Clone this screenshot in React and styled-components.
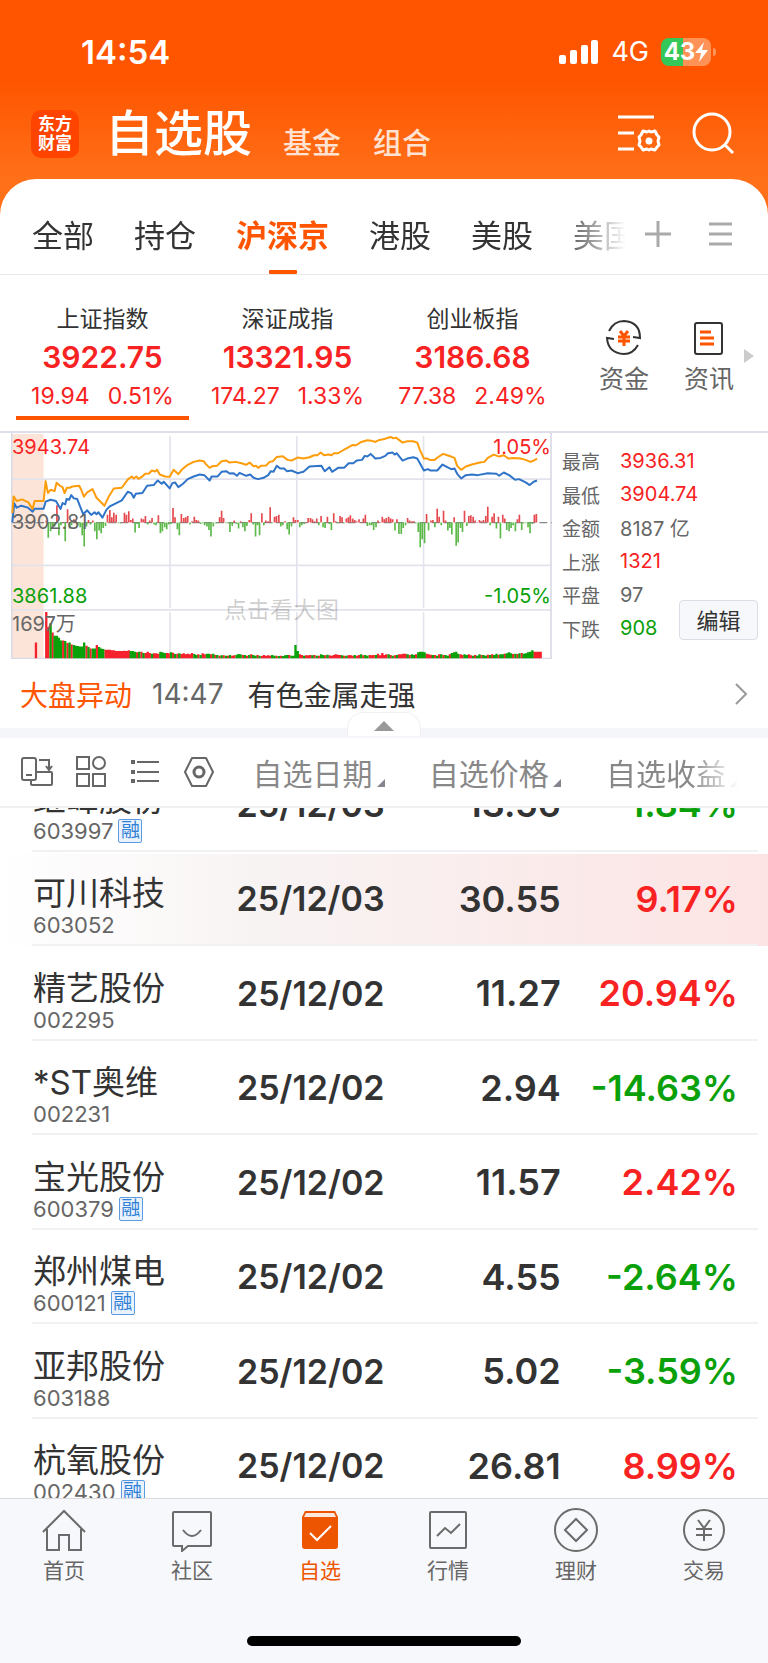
import React from 'react'
import styled, { createGlobalStyle } from 'styled-components';

const tabs = ['全部', '持仓', '沪深京', '港股', '美股', '美国'];

const indices = [
    { name: '上证指数', value: '3922.75', change: '19.94', percent: '0.51%', active: true },
    { name: '深证成指', value: '13321.95', change: '174.27', percent: '1.33%' },
    { name: '创业板指', value: '3186.68', change: '77.38', percent: '2.49%' },
];

const stats = [
    { label: '最高', value: '3936.31', tone: 'up' },
    { label: '最低', value: '3904.74', tone: 'up' },
    { label: '金额', value: '8187 亿' },
    { label: '上涨', value: '1321', tone: 'up' },
    { label: '平盘', value: '97' },
    { label: '下跌', value: '908', tone: 'down' },
];

const stocks = [
    { name: '继峰股份', code: '603997', margin: true, date: '25/12/03', price: '13.56', gain: '-1.84%' },
    { name: '可川科技', code: '603052', date: '25/12/03', price: '30.55', gain: '9.17%', flash: true },
    { name: '精艺股份', code: '002295', date: '25/12/02', price: '11.27', gain: '20.94%' },
    { name: '*ST奥维', code: '002231', date: '25/12/02', price: '2.94', gain: '-14.63%' },
    { name: '宝光股份', code: '600379', margin: true, date: '25/12/02', price: '11.57', gain: '2.42%' },
    { name: '郑州煤电', code: '600121', margin: true, date: '25/12/02', price: '4.55', gain: '-2.64%' },
    { name: '亚邦股份', code: '603188', date: '25/12/02', price: '5.02', gain: '-3.59%' },
    { name: '杭氧股份', code: '002430', margin: true, date: '25/12/02', price: '26.81', gain: '8.99%' },
];

// Chart units: 1626 x 681, x runs over the session, y grows downwards
const leadLine = '4,241 8,191 17,205 33,200 52,209 65,229 71,205 98,205 104,145 111,181 119,171 131,175 137,150 147,159 155,163 161,181 168,165 177,165 185,161 205,159 211,171 219,192 229,179 245,169 257,195 269,207 281,219 293,193 309,167 333,165 352,139 363,131 369,137 377,131 383,138 395,131 403,123 415,122 423,113 433,116 439,111 447,125 463,131 477,132 489,111 503,124 513,111 531,96 549,87 567,83 579,85 585,93 597,105 605,100 619,99 633,85 647,83 657,89 675,87 693,91 707,96 717,89 729,100 737,99 743,105 751,99 767,98 777,87 787,85 799,72 817,70 831,81 843,83 861,74 879,77 897,73 911,67 921,67 931,59 941,67 955,65 963,67 971,61 983,61 1003,49 1027,36 1037,37 1053,27 1071,22 1083,23 1095,27 1107,21 1119,19 1141,12 1149,16 1157,14 1177,29 1191,25 1209,25 1221,29 1229,51 1241,77 1251,77 1259,81 1273,81 1283,73 1299,63 1311,67 1323,71 1333,75 1341,99 1353,111 1367,101 1385,95 1409,89 1423,87 1433,75 1451,65 1467,71 1481,67 1495,77 1511,75 1531,77 1547,81 1561,87 1571,83 1581,77';
const priceLine = '4,269 10,212 17,225 31,219 51,225 65,237 71,228 98,228 104,207 119,201 135,205 149,229 155,211 163,215 167,199 175,201 181,187 189,197 199,199 217,245 229,233 241,247 251,239 257,245 263,239 275,255 287,231 297,221 333,203 351,177 361,181 369,195 375,183 395,181 409,159 429,157 441,143 453,153 459,147 477,167 485,151 493,149 503,163 517,153 531,139 549,131 567,125 581,127 597,143 603,131 621,131 633,117 647,115 657,122 669,121 679,129 687,120 707,129 719,125 729,135 743,139 759,135 773,127 781,115 789,117 799,99 809,107 821,107 829,115 843,113 861,121 879,117 897,101 933,99 943,115 957,103 965,117 983,105 1001,105 1015,91 1029,91 1039,83 1055,81 1063,69 1071,71 1081,63 1095,77 1111,75 1125,69 1133,61 1147,59 1153,65 1159,61 1177,83 1191,77 1209,73 1221,77 1231,95 1241,113 1253,109 1261,113 1281,113 1297,95 1311,103 1323,109 1333,107 1341,123 1353,137 1367,127 1385,125 1403,127 1433,121 1459,123 1467,129 1481,119 1497,127 1515,141 1527,139 1547,149 1559,157 1571,147 1581,143';

const momentum = [
    6, -46, -26, -10, -12, 52, -38, -8, 2, -56, 40, -18, -8, 10, 6, -8, -14, -38, -72, -12,
    8, -6, 6, -26, -50, -24, -32, -16, -10, 24, 38, 16, 30, 24, -2, -2, 2, 30, 24, 34,
    8, 12, -30, -4, -16, 12, 10, 20, -6, 6, 14, -6, -8, 22, -32, -26, -14, -20, -6, -4,
    44, 16, -20, -38, 26, 14, 16, 20, -6, 4, 18, 8, 6, -4, -2, -8, -12, -22, -42, -12,
    -2, -2, 16, 36, 14, -2, -2, -28, -10, 6, -4, -18, 4, -14, -26, -10, 8, 28, -6, -42,
    -8, -38, 28, -8, 6, 4, 46, -2, 18, 20, 24, -12, -8, 4, -20, -36, -12, 16, 8, 8,
    -14, -8, -4, 2, 14, 14, 10, 4, 12, -8, 20, -14, -16, 18, -4, -22, 28, 4, -2, 20,
    16, -2, 12, 16, 22, 12, 8, 4, 10, 2, 12, 24, -10, -8, -8, -22, -14, 6, 2, 18,
    10, 14, 18, 12, 10, -24, 10, -34, -34, -16, -8, 14, 6, 4, 4, -2, -28, -74, -50, -62,
    26, -24, 6, 8, -14, 42, 18, -8, 36, 6, -24, -16, -36, 16, -70, -60, -16, -28, 36, -10,
    20, 22, 18, 6, 2, 8, 4, 8, 20, 48, -8, 18, 28, -18, 18, -48, 24, 12, -22, -26,
    -16, -8, -26, 10, 24, -22, -2, -2, -14, -32, -4, 24, 26,
];

// Positive bars are drawn red, negative ones green
const volume = [
    140, 94, -106, 78, -68, -68, -62, -54, 54, -52, 46, -48, 42, -40, -38, -37, -36, -36, -48, 38,
    -34, 30, -30, -30, 40, -34, -30, -28, 26, 26, 26, 24, 24, 22, 22, 22, 22, 23, 22, 24,
    -22, -22, -20, 18, -20, 20, -16, 16, 20, 16, -14, 15, 15, 14, -20, -18, -16, 16, 15, -18,
    17, -13, 14, -15, 13, 15, 12, 14, 12, 16, -13, -10, 12, -10, 15, 12, -14, -14, 12, -14,
    10, -10, 8, -9, 9, -8, 8, -10, 8, 9, -11, -13, -12, 10, -10, 8, -10, 12, -10, -8,
    10, -8, 7, 10, 8, 9, 8, -10, -8, 8, -7, 8, -7, -9, -10, 10, -8, -8, -40, -22,
    12, 10, -8, 9, 9, 10, -9, 10, -8, 8, -12, -10, 9, -11, 9, 8, 10, 12, 11, 10,
    -9, 8, -8, 9, 10, 8, -10, 8, 10, -12, 9, -10, -8, 10, 9, 10, -10, 14, 9, 16,
    10, 12, -12, 10, -8, 9, -10, 12, 12, 14, 14, -12, 10, -12, -10, 12, -18, -20, -20, -18,
    14, 12, 11, -10, 10, -8, 12, -12, 10, -10, -8, 12, -16, -18, -20, -14, 12, 10, -12, -10,
    12, 9, -8, 10, -8, -12, 10, -10, -8, 11, -10, 12, -10, -14, 11, -12, -12, 14, -15, -18,
    -15, 13, -14, 13, -15, 16, -14, -15, -18, -20, -24, 20, 20, 20, 20,
];

const barX = (i) => Math.round(106 + i * 6.35);
const momentumBar = (value, i) => `M${barX(i)} 270v${-value}`;
const volumeBar = (value, i) => `M${barX(i)} 679v${-Math.abs(value)}`;

const getBars = (values, draw, sign) => {
    return values.map((value, i) => value * sign > 0 ? draw(value, i) : '').join('');
}

const Chart = () => (
    <ChartArea>
        <ChartSvg viewBox="0 0 1626 681" preserveAspectRatio="none" aria-hidden="true">
            <rect x="3" y="3" width="95" height="675" fill="#fce5d8" />
            <g stroke="#e2e3ec" strokeWidth="5" fill="none">
                <path d="M0 139H1623M0 399H1623M0 533H1623" />
                <path d="M478 10V527M478 540V678M859 10V527M859 540V678M1240 10V527M1240 540V678" />
                <path d="M2 0V681M1623 0V681M0 680H1626" stroke="#d9dae6" />
            </g>
            <path d="M4 270H1626" stroke="#888" strokeWidth="4" strokeDasharray="24 12" />
            <g strokeWidth="5">
                <path d={getBars(momentum, momentumBar, 1)} stroke="#e5484d" />
                <path d={getBars(momentum, momentumBar, -1)} stroke="#5cb94a" />
            </g>
            <g strokeWidth="7">
                <path d={`M75 679V631${getBars(volume, volumeBar, 1)}`} stroke="#f5222d" />
                <path d={getBars(volume, volumeBar, -1)} stroke="#0aa00a" />
            </g>
            <g fill="none" strokeWidth="6" strokeLinejoin="round">
                <polyline points={priceLine} stroke="#2f74c8" />
                <polyline points={leadLine} stroke="#ff9c0a" />
            </g>
        </ChartSvg>
        <ChartLabel $top={4} $tone="up">3943.74</ChartLabel>
        <ChartLabel $top={4} $tone="up" $right>1.05%</ChartLabel>
        <ChartLabel $top={79}>3902.81</ChartLabel>
        <ChartLabel $top={153} $tone="down">3861.88</ChartLabel>
        <ChartLabel $top={153} $tone="down" $right>-1.05%</ChartLabel>
        <ChartLabel $top={181}>1697万</ChartLabel>
        <ChartHint>点击看大图</ChartHint>
    </ChartArea>
)

const navItems = [
    { label: '首页', icon: <path d="M1 24L22 3l21 21M5 21v21h12V27h10v15h12V21" /> },
    { label: '社区', icon: <path d="M4 4h36q1 0 1 1v32q0 1-1 1H18l-6 5v-5H4q-1 0-1-1V5q0-1 1-1zM13 22q9 12 18 0" /> },
    {
        label: '自选',
        active: true,
        icon: (
            <>
                <path d="M7 3h30l3 6v29q0 3-3 3H7q-3 0-3-3V9z" fill="#ee5500" stroke="none" />
                <path d="M8 5h28l2 4H6z" fill="#ffe9dd" stroke="none" />
                <path d="M12 25l7 7 14-14" stroke="#fff" />
            </>
        ),
    },
    { label: '行情', icon: <path d="M5 4h34q1 0 1 1v34q0 1-1 1H5q-1 0-1-1V5q0-1 1-1zM11 28l8-8 6 5 9-9" /> },
    { label: '理财', icon: <><circle cx="22" cy="22" r="21" /><path d="M22 11l11 11-11 11-11-11z" /></> },
    { label: '交易', icon: <><circle cx="22" cy="22" r="20" /><path d="M16 12l6 8 6-8M14 21h16M14 27h16M22 20v13" /></> },
];

const ToolIcons = () => (
    <Tools>
        <ToolButton aria-label="切换视图">
            <svg width="32" height="32" viewBox="0 0 32 32">
                <rect x="1" y="2" width="14" height="22" rx="2" />
                <path d="M5 19h6M18 4h10v9M25 10l3 4 3-4M15 16h15q1 0 1 1v11q0 1-1 1H11q-1 0-1-1v-4" />
            </svg>
        </ToolButton>
        <ToolButton aria-label="宫格">
            <svg width="32" height="32" viewBox="0 0 32 32">
                <path d="M2 1h12v12H2zM2 18h12v12H2zM18 18h12v12H18z" />
                <circle cx="24" cy="7" r="6" />
            </svg>
        </ToolButton>
        <ToolButton aria-label="列表">
            <svg width="32" height="32" viewBox="0 0 32 32">
                <path d="M8 6h22M8 16h22M8 25h22" />
                <path d="M2 6h4M2 16h4M2 25h4" strokeWidth="4" />
            </svg>
        </ToolButton>
        <ToolButton aria-label="设置">
            <svg width="32" height="32" viewBox="0 0 32 32">
                <path d="M9 2h14l7 14-7 14H9L2 16z" strokeLinejoin="round" />
                <circle cx="16" cy="16" r="5" strokeWidth="3" />
            </svg>
        </ToolButton>
    </Tools>
)

const App = () => (
    <Page>
        <GlobalStyle />
        <Header>
            <StatusBar>
                <Clock>14:54</Clock>
                <Signals>
                    <svg width="40" height="26" viewBox="0 0 40 26" fill="#fff" aria-hidden="true">
                        <rect x="0" y="16" width="7" height="9" rx="2" />
                        <rect x="11" y="11" width="7" height="14" rx="2" />
                        <rect x="22" y="6" width="7" height="19" rx="2" />
                        <rect x="32" y="1" width="7" height="24" rx="2" />
                    </svg>
                    <Network>4G</Network>
                    <Battery>
                        43
                        <svg width="13" height="20" viewBox="0 0 13 20" fill="#fff" aria-hidden="true">
                            <path d="M9 0L0 11h6L4 20l9-12H7z" />
                        </svg>
                    </Battery>
                </Signals>
            </StatusBar>
            <TitleBar>
                <Logo><span>东方</span><span>财富</span></Logo>
                <Title>自选股</Title>
                <SubLink href="#fund">基金</SubLink>
                <SubLink href="#group">组合</SubLink>
                <HeaderActions>
                    <HeaderButton aria-label="管理">
                        <svg width="44" height="40" viewBox="0 0 44 40">
                            <path d="M1 3h36M1 19h16M1 35h16" />
                            <path d="M26 17l4 1 2-1 2 1 4-1 2 4 2 2-1 4 1 4-2 2-2 3-4-1-2 1-2-1-4 1-2-3-2-2 1-4-1-4 2-2z" strokeLinejoin="round" />
                            <circle cx="32" cy="27" r="2" fill="#fff" />
                        </svg>
                    </HeaderButton>
                    <HeaderButton aria-label="搜索">
                        <svg width="44" height="44" viewBox="0 0 44 44">
                            <circle cx="21" cy="20" r="18" />
                            <path d="M34 33l8 8" />
                        </svg>
                    </HeaderButton>
                </HeaderActions>
            </TitleBar>
        </Header>
        <Sheet>
            <TabBar>
                <TabList>
                    {tabs.map((tab) =>
                        <Tab key={tab} $active={tab === '沪深京'}>{tab}</Tab>
                    )}
                </TabList>
                <TabAction aria-label="添加">
                    <svg width="28" height="28" viewBox="0 0 28 28"><path d="M14 1v26M1 14h26" /></svg>
                </TabAction>
                <TabAction aria-label="菜单">
                    <svg width="28" height="28" viewBox="0 0 28 28"><path d="M3 4h23M3 14h23M3 24h23" /></svg>
                </TabAction>
            </TabBar>

            <IndexBar>
                {indices.map((item) =>
                    <IndexCard key={item.name} $active={item.active}>
                        <IndexName>{item.name}</IndexName>
                        <IndexValue>{item.value}</IndexValue>
                        <IndexChange><span>{item.change}</span><span>{item.percent}</span></IndexChange>
                    </IndexCard>
                )}
                <Shortcuts>
                    <Shortcut href="#funds">
                        <svg width="36" height="36" viewBox="0 0 36 36" fill="none" strokeWidth="2">
                            <path d="M3 11Q8 1 18 1q16 1 16 17l-7-1M32 25q-5 9-14 9Q2 33 1 18l7 1" stroke="#333" />
                            <path d="M14 11l4 5 4-5M12 17h12M12 21h12M18 16v10" stroke="#ff5500" strokeWidth="3" />
                        </svg>
                        资金
                    </Shortcut>
                    <Shortcut href="#news">
                        <svg width="36" height="36" viewBox="0 0 36 36" fill="none" strokeWidth="2">
                            <rect x="4" y="3" width="27" height="31" rx="2" stroke="#333" />
                            <path d="M9 12h11M9 18h14M9 24h14" stroke="#ff5500" strokeWidth="3" />
                        </svg>
                        资讯
                    </Shortcut>
                </Shortcuts>
                <svg width="10" height="14" viewBox="0 0 10 14" fill="#ccc" aria-hidden="true"><path d="M0 0l10 7-10 7z" /></svg>
            </IndexBar>

            <Market>
                <Chart />
                <StatPanel>
                    <StatList>
                        {stats.map((stat) =>
                            <Stat key={stat.label}>
                                <dt>{stat.label}</dt>
                                <StatValue $tone={stat.tone}>{stat.value}</StatValue>
                            </Stat>
                        )}
                    </StatList>
                    <EditButton>编辑</EditButton>
                </StatPanel>
            </Market>

            <NewsBar href="#move">
                <NewsTag>大盘异动</NewsTag>
                <NewsTime>14:47</NewsTime>
                <span>有色金属走强</span>
                <svg width="13" height="24" viewBox="0 0 13 24" fill="none" stroke="#999" strokeWidth="2"><path d="M1 2l10 10L1 22" /></svg>
            </NewsBar>
            <Divider>
                <Collapse aria-label="收起">
                    <svg width="20" height="10" viewBox="0 0 20 10" fill="#999"><path d="M10 0l10 10H0z" /></svg>
                </Collapse>
            </Divider>

            <Table>
                <TableHead>
                    <Row $head>
                        <th><ToolIcons /></th>
                        {['自选日期', '自选价格', '自选收益'].map((label, i) =>
                            <HeadCell key={label} $fade={i === 2}>
                                <SortButton>
                                    {label}
                                    <svg width="8" height="8" viewBox="0 0 8 8" fill="#85858d"><path d="M8 0v8H0z" /></svg>
                                </SortButton>
                            </HeadCell>
                        )}
                    </Row>
                </TableHead>
                <TableBody>
                    {stocks.map((stock) =>
                        <Row key={stock.code} $flash={stock.flash}>
                            <NameCell>
                                <StockName>{stock.name}</StockName>
                                <StockCode>{stock.code}{stock.margin && <Badge>融</Badge>}</StockCode>
                            </NameCell>
                            <DateCell>{stock.date}</DateCell>
                            <NumberCell>{stock.price}</NumberCell>
                            <NumberCell $tone={stock.gain[0] === '-' ? 'down' : 'up'}>{stock.gain}</NumberCell>
                        </Row>
                    )}
                </TableBody>
            </Table>
        </Sheet>
        <BottomNav>
            <NavList>
                {navItems.map((item) =>
                    <NavLink key={item.label} href="#nav" $active={item.active}>
                        <svg width="44" height="44" viewBox="0 0 44 44" fill="none" stroke="#6b6b6b" strokeWidth="2">{item.icon}</svg>
                        {item.label}
                    </NavLink>
                )}
            </NavList>
            <HomeIndicator />
        </BottomNav>
    </Page>
)

export default App;

/*
    Styles
*/
const tones = {
    up: '#f82222',
    down: '#0aa00a',
};

const GlobalStyle = createGlobalStyle`
    * {
        box-sizing: border-box;
    }

    body {
        margin: 0;
        background: white;
        color: #333;
        font-family: Inter, "Noto Sans CJK SC", sans-serif;
    }

    button {
        padding: 0;
        border: 0;
        background: none;
        color: inherit;
        font: inherit;
    }

    a {
        color: inherit;
        text-decoration: none;
    }

    svg {
        display: block;
        flex-shrink: 0;
    }
`;

const Page = styled.div`
    min-height: 100vh;
    padding-bottom: 149px;
`;

const Header = styled.header`
    padding-bottom: 55px;
    background: linear-gradient(#ff5500 80px, #ff7019 180px);
    color: white;
`;

const StatusBar = styled.div`
    display: flex;
    align-items: center;
    justify-content: space-between;
    height: 103px;
    padding: 0 57px 0 81px;
`;

const Clock = styled.time`
    font-size: 33px;
    font-weight: 600;
`;

const Signals = styled.div`
    display: flex;
    align-items: center;
    gap: 12px;
`;

const Network = styled.span`
    font-size: 27px;
`;

const Battery = styled.div`
    position: relative;
    display: flex;
    align-items: center;
    justify-content: center;
    width: 50px;
    height: 28px;
    border-radius: 8px;
    background: linear-gradient(90deg, #34c759 43%, #ff9257 43%);
    font-size: 24px;
    font-weight: 700;

    &::after {
        content: '';
        position: absolute;
        top: 10px;
        right: -5px;
        width: 3px;
        height: 8px;
        border-radius: 0 3px 3px 0;
        background: #ff9257;
    }
`;

const TitleBar = styled.div`
    display: flex;
    align-items: center;
    height: 61px;
    padding: 0 33px 0 31px;
`;

const Logo = styled.div`
    display: flex;
    flex-direction: column;
    align-items: center;
    justify-content: center;
    width: 48px;
    height: 48px;
    border-radius: 10px;
    background: #ff4400;
    font-size: 17px;
    font-weight: 700;
    line-height: 19px;
`;

const Title = styled.h1`
    margin: 0 31px 0 26px;
    font-size: 49px;
    font-weight: 500;
    line-height: 60px;
`;

const SubLink = styled.a`
    margin: 20px 32px 0 0;
    color: #ffe2d2;
    font-size: 29px;
    font-weight: 500;
    line-height: 40px;
`;

const HeaderActions = styled.div`
    display: flex;
    align-items: center;
    gap: 30px;
    margin-left: auto;
`;

const HeaderButton = styled.button`
    svg {
        fill: none;
        stroke: white;
        stroke-width: 3px;
    }
`;

const Sheet = styled.main`
    position: relative;
    margin-top: -40px;
    border-radius: 36px 36px 0 0;
    background: white;
`;

const TabBar = styled.nav`
    display: flex;
    align-items: stretch;
    height: 96px;
    padding: 14px 34px 0 32px;
    border-bottom: 1px solid #e9e9ec;
`;

const TabList = styled.div`
    display: flex;
    flex: 1;
    gap: 40px;
    min-width: 0;
    overflow: hidden;
    mask-image: linear-gradient(270deg, transparent, black 70px);
`;

const Tab = styled.button`
    position: relative;
    flex-shrink: 0;
    color: ${props => props.$active ? '#ff5500' : '#333'};
    font-size: 31px;
    font-weight: ${props => props.$active ? 700 : 400};

    &::after {
        content: '';
        position: absolute;
        bottom: 0;
        left: 50%;
        width: 28px;
        height: 4px;
        margin-left: -14px;
        border-radius: 1px;
        background: ${props => props.$active ? '#ff5500' : 'transparent'};
    }
`;

const TabAction = styled.button`
    margin-left: 18px;

    & + & {
        margin-left: 34px;
    }

    svg {
        stroke: #aaa;
        stroke-width: 3px;
    }
`;

const IndexBar = styled.section`
    display: grid;
    grid-template-columns: 185fr 185fr 185fr 179fr 10px;
    align-items: start;
    padding: 27px 14px 11px 10px;

    > svg {
        margin-top: 47px;
    }
`;

const IndexCard = styled.div`
    text-align: center;

    &::after {
        content: '';
        display: block;
        height: 4px;
        margin: 2px 6px 0;
        background: ${props => props.$active ? '#ff5500' : 'transparent'};
    }
`;

const IndexName = styled.div`
    font-size: 23px;
    line-height: 34px;
`;

const IndexValue = styled.div`
    color: ${tones.up};
    font-size: 30px;
    font-weight: 600;
    line-height: 42px;
`;

const IndexChange = styled.div`
    display: flex;
    justify-content: center;
    gap: 18px;
    color: ${tones.up};
    font-size: 23px;
    line-height: 36px;
`;

const Shortcuts = styled.div`
    display: flex;
    justify-content: flex-end;
    gap: 35px;
    padding: 18px 10px 0 0;
`;

const Shortcut = styled.a`
    display: flex;
    flex-direction: column;
    align-items: center;
    gap: 5px;
    color: #666;
    font-size: 25px;
    line-height: 36px;
`;

const Market = styled.section`
    display: flex;
    padding-left: 11px;
    border-top: 2px solid #dddee8;
`;

const ChartArea = styled.div`
    position: relative;
    flex: 1;
    height: 226px;
`;

const ChartSvg = styled.svg`
    width: 100%;
    height: 100%;
`;

const ChartLabel = styled.span`
    position: absolute;
    top: ${props => props.$top}px;
    ${props => props.$right ? 'right' : 'left'}: 1px;
    color: ${props => tones[props.$tone] || '#666'};
    font-size: 20px;
    line-height: 20px;
`;

const ChartHint = styled.span`
    position: absolute;
    top: 164px;
    left: 50%;
    transform: translateX(-50%);
    color: #00000033;
    font-size: 23px;
    line-height: 26px;
    white-space: nowrap;
`;

const StatPanel = styled.div`
    position: relative;
    width: 216px;
    padding: 11px 0 0 10px;
`;

const StatList = styled.dl`
    display: grid;
    grid-auto-rows: 1fr;
    height: 201px;
    margin: 0;
`;

const Stat = styled.div`
    display: flex;
    align-items: center;
    gap: 20px;
    color: #666;
    font-size: 19px;
`;

const StatValue = styled.dd`
    margin: 0;
    color: ${props => tones[props.$tone] || '#666'};
    font-size: 20px;
`;

const EditButton = styled.button`
    position: absolute;
    right: 10px;
    bottom: 19px;
    width: 79px;
    height: 40px;
    padding-bottom: 3px;
    border: 1px solid #dcdde6;
    border-radius: 4px;
    background: #f7f8fb;
    font-size: 22px;
`;

const NewsBar = styled.a`
    display: flex;
    align-items: center;
    height: 69px;
    padding: 0 20px;
    font-size: 28px;

    svg {
        margin-left: auto;
    }
`;

const NewsTag = styled.span`
    color: #ff5500;
`;

const NewsTime = styled.time`
    margin: 0 24px 0 20px;
    color: #666;
`;

const Divider = styled.div`
    position: relative;
    height: 10px;
    background: #f5f6f9;
`;

const Collapse = styled.button`
    position: absolute;
    bottom: 2px;
    left: 50%;
    display: flex;
    align-items: center;
    justify-content: center;
    width: 74px;
    height: 24px;
    margin-left: -37px;
    padding-top: 2px;
    border: 1px solid #f0f0f3;
    border-bottom: 0;
    border-radius: 16px 16px 0 0;
    background: white;
`;

const Table = styled.table`
    display: block;
`;

const TableHead = styled.thead`
    position: relative;
    z-index: 1;
    display: block;
    border-bottom: 2px solid #f0f0f2;
    background: white;
`;

// The list is scrolled: its first row lies half under the head
const TableBody = styled.tbody`
    display: grid;
    grid-auto-rows: 1fr;
    height: 756px;
    margin-top: -51px;
`;

const Row = styled.tr`
    position: relative;
    display: grid;
    grid-template-columns: 215fr 169fr 176fr 177fr;
    align-items: center;
    height: ${props => props.$head ? '68px' : 'auto'};
    padding-right: 30px;
    background: ${props => props.$flash ? 'linear-gradient(90deg, #ffffff, #f8f3f3 35%, #fde4e4) 0 2px no-repeat' : 'none'};

    &::after {
        content: '';
        position: absolute;
        right: 10px;
        bottom: 0;
        left: 32px;
        height: ${props => props.$head ? 0 : '2px'};
        background: #f1f1f3;
    }

    th,
    td {
        padding: 0;
    }
`;

const Tools = styled.div`
    display: flex;
    justify-content: space-between;
    padding-left: 21px;
`;

const ToolButton = styled.button`
    svg {
        fill: none;
        stroke: #666;
        stroke-width: 2px;
    }
`;

const HeadCell = styled.th`
    color: #888;
    font-size: 30px;
    font-weight: 400;
    mask-image: ${props => props.$fade ? 'linear-gradient(270deg, transparent, black 48px)' : 'none'};
`;

const SortButton = styled.button`
    display: flex;
    align-items: flex-end;
    gap: 4px;
    margin-left: auto;
    white-space: nowrap;

    svg {
        margin-bottom: 7px;
    }
`;

const NameCell = styled.td`
    && {
        padding: 15px 0 0 33px;
    }
`;

const StockName = styled.div`
    font-size: 33px;
    line-height: 38px;
    white-space: nowrap;
`;

const StockCode = styled.div`
    display: flex;
    align-items: center;
    gap: 5px;
    color: #666;
    font-size: 22px;
    line-height: 26px;
`;

const Badge = styled.span`
    width: 24px;
    height: 24px;
    border: 1px solid #5b9be0;
    border-radius: 2px;
    background: #eaf3fd;
    color: #2f7fd6;
    font-size: 19px;
    line-height: 22px;
    text-align: center;
`;

const NumberCell = styled.td`
    color: ${props => tones[props.$tone] || '#333'};
    font-size: 36px;
    font-weight: 600;
    text-align: right;
    white-space: nowrap;
`;

const DateCell = styled(NumberCell)`
    font-size: 34px;
`;

const BottomNav = styled.nav`
    position: fixed;
    right: 0;
    bottom: 0;
    left: 0;
    z-index: 2;
    height: 165px;
    border-top: 1px solid #dcdce0;
    background: #f7f8fb;
`;

const NavList = styled.div`
    display: grid;
    grid-template-columns: repeat(6, 1fr);
    padding-top: 9px;
`;

const NavLink = styled.a`
    display: flex;
    flex-direction: column;
    align-items: center;
    gap: 3px;
    color: ${props => props.$active ? '#ee5500' : '#666'};
    font-size: 21px;
    line-height: 32px;
`;

const HomeIndicator = styled.div`
    position: absolute;
    bottom: 17px;
    left: 50%;
    width: 274px;
    height: 10px;
    border-radius: 5px;
    background: black;
    transform: translateX(-50%);
`;
